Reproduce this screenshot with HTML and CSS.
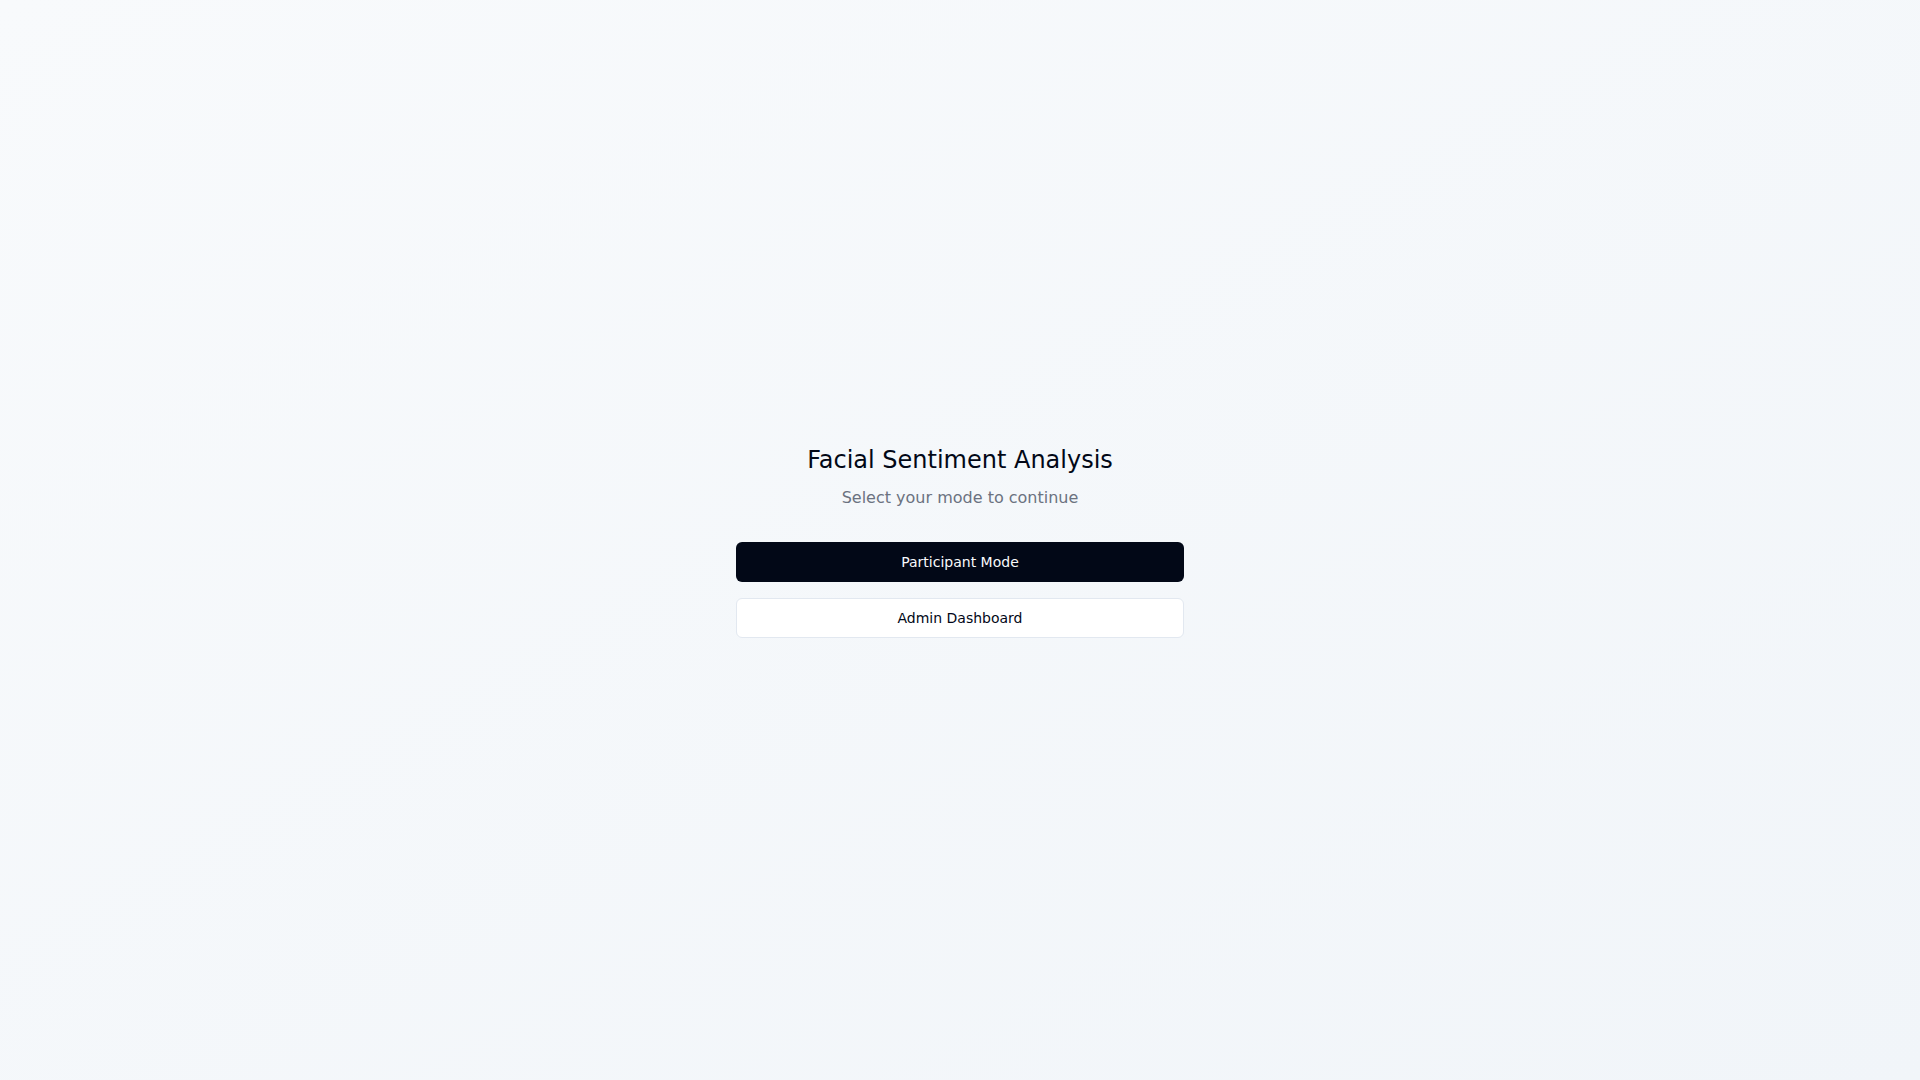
FILE: index.html
```html
<!DOCTYPE html>
<html lang="en">
<head>
<meta charset="utf-8">
<title>Facial Sentiment Analysis</title>
<link rel="stylesheet" href="styles.css">
</head>
<body>
<main class="page">
  <div class="panel">
    <div class="header">
      <h1 class="title">Facial Sentiment Analysis</h1>
      <p class="subtitle">Select your mode to continue</p>
    </div>
    <div class="actions">
      <button class="btn btn-primary" type="button">Participant Mode</button>
      <button class="btn btn-outline" type="button">Admin Dashboard</button>
    </div>
  </div>
</main>
</body>
</html>
```

FILE: styles.css
```css
* { box-sizing: border-box; }
html, body { margin: 0; padding: 0; }
body {
  font-family: "DejaVu Sans", sans-serif;
  color: #020817;
}
.page {
  min-height: 100vh;
  padding-top: 2px;
  display: flex;
  align-items: center;
  justify-content: center;
  background: linear-gradient(to bottom right, #f8fafc, #f1f5f9);
}
.panel {
  width: 448px;
  display: flex;
  flex-direction: column;
}
.header {
  text-align: center;
  margin-bottom: 32px;
}
.title {
  margin: 0;
  font-size: 24px;
  line-height: 32px;
  font-weight: 400;
  color: #020817;
}
.subtitle {
  margin: 10px 0 0;
  font-size: 16px;
  line-height: 24px;
  color: #6b7280;
}
.actions {
  display: flex;
  flex-direction: column;
  gap: 16px;
}
.btn {
  height: 40px;
  width: 100%;
  border-radius: 6px;
  font-family: "DejaVu Sans", sans-serif;
  font-size: 14px;
  font-weight: 400;
  cursor: pointer;
}
.btn-primary {
  background: #020817;
  color: #f8fafc;
  border: none;
}
.btn-outline {
  background: #ffffff;
  color: #020817;
  border: 1px solid #e2e8f0;
}
```
